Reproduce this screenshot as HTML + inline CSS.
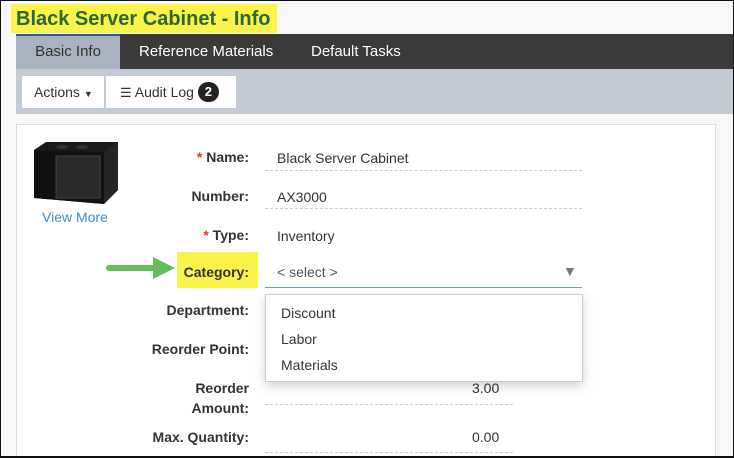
<!DOCTYPE html>
<html style="width:734px;height:458px;overflow:hidden"><head><style>
*{margin:0;padding:0;box-sizing:border-box}
body{width:734px;height:458px;overflow:hidden;background:#fff;font-family:"Liberation Sans",sans-serif;position:relative}
.a{position:absolute}
.lbl{position:absolute;right:485px;font-weight:bold;font-size:14px;color:#333;text-align:right;line-height:20px}
.req{color:#e33;font-weight:bold}
.val{position:absolute;left:277px;font-size:14px;color:#333}
.ul{position:absolute;left:265px;border-bottom:1px dashed #ccc}
</style></head><body>
<div class="a" style="left:0;top:0;width:734px;height:458px;background:#f7f7f7"></div>
<div class="a" style="left:11px;top:4px;width:266px;height:29px;background:#fbf24a"></div>
<div class="a" style="left:16px;top:6px;font-size:20px;font-weight:bold;color:#276a30;line-height:26px">Black Server Cabinet - Info</div>
<div class="a" style="left:16px;top:34px;width:718px;height:35px;background:#3a3a3a"></div>
<div class="a" style="left:16px;top:34px;width:104px;height:35px;background:#a8b3bf;border-top:2px solid #2a5e9a;color:#333;font-size:15px;text-align:center;line-height:32px">Basic Info</div>
<div class="a" style="left:139px;top:34px;color:#fff;font-size:15px;line-height:35px">Reference Materials</div>
<div class="a" style="left:311px;top:34px;color:#fff;font-size:15px;line-height:35px">Default Tasks</div>
<div class="a" style="left:16px;top:69px;width:718px;height:45px;background:#c3cad3"></div>
<div class="a" style="left:22px;top:76px;width:82px;height:32px;background:#fff;font-size:14px;color:#333;line-height:32px;padding-left:12px">Actions <span style="font-size:9px">▼</span></div>
<div class="a" style="left:106px;top:76px;width:130px;height:32px;background:#fff;font-size:14px;color:#333;line-height:32px;padding-left:14px"><span style="font-size:13px">☰</span> Audit Log <span style="display:inline-block;background:#222;color:#fff;border-radius:10px;width:21px;height:20px;line-height:20px;text-align:center;font-weight:bold;font-size:13px;vertical-align:1px">2</span></div>
<div class="a" style="left:16px;top:124px;width:700px;height:334px;background:#fff;border:1px solid #ddd;border-bottom:none"></div>
<svg class="a" style="left:30px;top:140px" width="90" height="66" viewBox="0 0 90 66">
<polygon points="4,10 16,2 88,2 88,50 74,64 4,58" fill="#1b1b1b"/>
<polygon points="4,10 74,12 74,64 4,58" fill="#111"/>
<polygon points="74,12 88,2 88,50 74,64" fill="#262626"/>
<rect x="26" y="16" width="44" height="42" fill="#2a2a2a" stroke="#444"/>
<ellipse cx="32" cy="7" rx="6" ry="2" fill="#333"/><ellipse cx="52" cy="7" rx="6" ry="2" fill="#333"/>
</svg>
<div class="a" style="left:42px;top:209px;font-size:14px;color:#3a8fd6">View More</div>
<div class="lbl" style="top:147px"><span class="req">*</span> Name:</div>
<div class="val" style="top:150px">Black Server Cabinet</div>
<div class="ul" style="top:170px;width:317px"></div>
<div class="lbl" style="top:186px">Number:</div>
<div class="val" style="top:189px">AX3000</div>
<div class="ul" style="top:208px;width:317px"></div>
<div class="lbl" style="top:225px"><span class="req">*</span> Type:</div>
<div class="val" style="top:228px">Inventory</div>
<svg class="a" style="left:105px;top:256px" width="72" height="24"><line x1="4" y1="12" x2="50" y2="12" stroke="#66bb5e" stroke-width="6" stroke-linecap="round"/><polygon points="48,1 70,12 48,23" fill="#66bb5e"/></svg>
<div class="a" style="left:177px;top:252px;width:81px;height:36px;background:#fbf24a"></div>
<div class="lbl" style="top:262px">Category:</div>
<div class="val" style="top:264px;color:#555">&lt; select &gt;</div>
<div class="a" style="left:563px;top:263px;font-size:14px;color:#777">▼</div>
<div class="a" style="left:265px;top:287px;width:317px;border-bottom:1px solid #6a9fd0"></div>
<div class="lbl" style="top:300px">Department:</div>
<div class="lbl" style="top:339px">Reorder Point:</div>
<div class="lbl" style="top:378px">Reorder<br>Amount:</div>
<div class="a" style="left:472px;top:380px;font-size:14px;color:#333">3.00</div>
<div class="ul" style="top:404px;width:248px"></div>
<div class="lbl" style="top:427px">Max. Quantity:</div>
<div class="a" style="left:472px;top:429px;font-size:14px;color:#333">0.00</div>
<div class="ul" style="top:452px;width:248px"></div>
<div class="a" style="left:265px;top:294px;width:318px;height:88px;background:#fff;border:1px solid #ccc;box-shadow:0 4px 10px rgba(0,0,0,.18);font-size:14px;color:#333">
<div class="a" style="left:15px;top:10px">Discount</div>
<div class="a" style="left:15px;top:36px">Labor</div>
<div class="a" style="left:15px;top:62px">Materials</div>
</div>
<div class="a" style="left:0;top:0;width:734px;height:458px;border:1px solid #111;border-bottom:2px solid #111"></div>
</body></html>
